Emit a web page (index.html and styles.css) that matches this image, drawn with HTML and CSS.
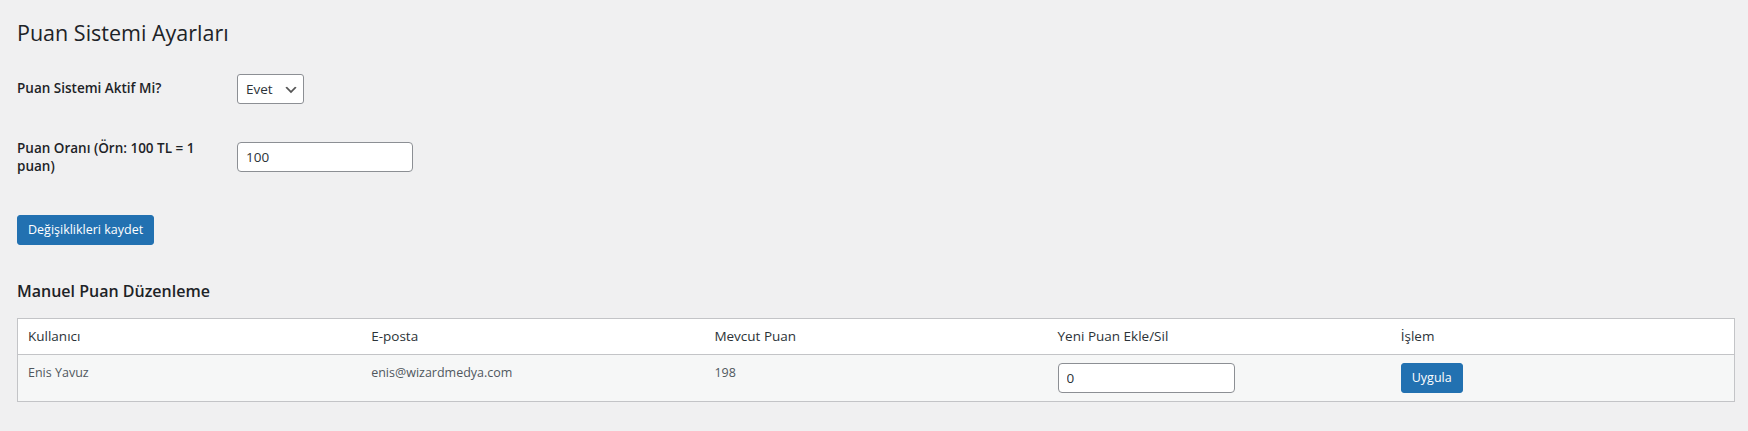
FILE: index.html
```html
<!DOCTYPE html>
<html lang="tr">
<head>
<meta charset="utf-8">
<title>Puan Sistemi Ayarları</title>
<link rel="stylesheet" href="styles.css">
</head>
<body>
<div class="wrap">
  <h1 class="page-title">Puan Sistemi Ayarları</h1>
  <form class="settings-form">
    <table class="form-table">
      <tbody>
        <tr>
          <th scope="row"><label for="aktif">Puan Sistemi Aktif Mi?</label></th>
          <td>
            <span class="select-wrap">
              <select id="aktif" class="select">
                <option>Evet</option>
                <option>Hayır</option>
              </select>
              <svg class="select-arrow" width="16" height="16" viewBox="0 0 20 20" aria-hidden="true"><path d="M5 6l5 5 5-5 2 1-7 7-7-7 2-1z" fill="#555"/></svg>
            </span>
          </td>
        </tr>
        <tr>
          <th scope="row"><label for="oran">Puan Oranı (Örn: 100 TL = 1 puan)</label></th>
          <td><input id="oran" class="text-input rate-input" type="text" value="100"></td>
        </tr>
      </tbody>
    </table>
    <p class="submit"><button type="button" class="button-primary">Değişiklikleri kaydet</button></p>
  </form>

  <h2 class="section-title">Manuel Puan Düzenleme</h2>
  <table class="widefat">
    <thead>
      <tr>
        <th>Kullanıcı</th>
        <th>E-posta</th>
        <th>Mevcut Puan</th>
        <th>Yeni Puan Ekle/Sil</th>
        <th>İşlem</th>
      </tr>
    </thead>
    <tbody>
      <tr>
        <td>Enis Yavuz</td>
        <td>enis@wizardmedya.com</td>
        <td>198</td>
        <td><input class="text-input points-input" type="text" value="0"></td>
        <td><button type="button" class="button-primary">Uygula</button></td>
      </tr>
    </tbody>
  </table>
</div>
</body>
</html>
```

FILE: styles.css
```css
html, body {
  margin: 0;
  padding: 0;
  background: #f0f0f1;
}

body {
  font-family: "Open Sans", "Noto Sans", "Liberation Sans", sans-serif;
  font-size: 13px;
  line-height: 1.4em;
  color: #3c434a;
}

.wrap {
  padding: 9px 13px 0 17px;
}

.page-title {
  margin: 0;
  padding: 9px 0 4px;
  font-size: 21.5px;
  line-height: 29.9px;
  font-weight: 400;
  color: #1d2327;
}

.settings-form {
  margin: 0;
}

.form-table {
  border-collapse: collapse;
  margin-top: 7px;
}

.form-table th {
  width: 200px;
  padding: 20px 10px 20px 0;
  text-align: left;
  vertical-align: top;
  font-size: 13.5px;
  line-height: 18.2px;
  font-weight: 600;
  color: #1d2327;
}

.form-table td {
  padding: 15px 10px;
  vertical-align: middle;
  font-size: 14px;
  line-height: 1.3;
}

.select-wrap {
  position: relative;
  display: inline-block;
  vertical-align: top;
}

.select {
  -webkit-appearance: none;
  appearance: none;
  box-sizing: border-box;
  width: 67px;
  height: 30px;
  margin: 0;
  padding: 0 24px 0 8px;
  border: 1px solid #8c8f94;
  border-radius: 3px;
  background: #fff;
  font-family: inherit;
  font-size: 13.5px;
  line-height: 28px;
  color: #2c3338;
  display: block;
}

.select-arrow {
  position: absolute;
  right: 5px;
  top: 8px;
  pointer-events: none;
}

.text-input {
  box-sizing: border-box;
  height: 30px;
  margin: 0;
  padding: 0 8px;
  border: 1px solid #8c8f94;
  border-radius: 4px;
  background: #fff;
  font-family: inherit;
  font-size: 13.5px;
  line-height: 28px;
  color: #2c3338;
  vertical-align: top;
}

.rate-input {
  width: 176px;
}

.points-input {
  width: 177px;
}

.submit {
  margin: 20px 0 0;
  padding: 0;
}

.button-primary {
  box-sizing: border-box;
  height: 30px;
  margin: 0;
  padding: 0 10px;
  border: 1px solid #2271b1;
  border-radius: 3px;
  background: #2271b1;
  color: #fff;
  font-family: inherit;
  font-size: 12.5px;
  line-height: 28px;
  vertical-align: top;
  cursor: pointer;
}

.section-title {
  margin: 37px 0 17px;
  font-size: 16px;
  line-height: 18.2px;
  font-weight: 600;
  color: #1d2327;
}

.widefat {
  width: 100%;
  table-layout: fixed;
  border-collapse: separate;
  border-spacing: 0;
  border: 1px solid #c3c4c7;
  background: #fff;
}

.widefat thead th {
  padding: 8px 10px;
  text-align: left;
  font-size: 13.5px;
  line-height: 19.6px;
  font-weight: 400;
  color: #2c3338;
  border-bottom: 1px solid #c3c4c7;
}

.widefat tbody td {
  padding: 8px 10px;
  vertical-align: top;
  font-size: 12.5px;
  line-height: 19.5px;
  color: #50575e;
  background: #f6f7f7;
}
```
